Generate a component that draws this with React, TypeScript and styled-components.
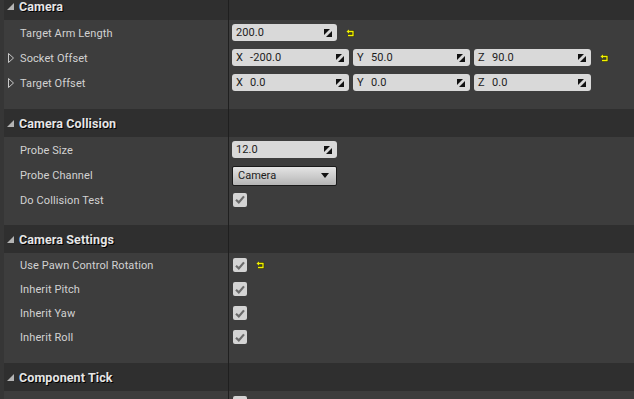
import React from "react";
import styled, { createGlobalStyle } from "styled-components";

const Global = createGlobalStyle`
  html, body { margin: 0; padding: 0; background: #3d3d3d; overflow: hidden; }
  body { font-family: Roboto, "Noto Sans", "Liberation Sans", sans-serif; }
`;

const Panel = styled.div`
  display: flex;
  width: 634px;
  height: 399px;
  overflow: hidden;
  background: #3d3d3d;
`;

const Strip = styled.div`
  width: 4px;
  flex: none;
  background: #363636;
`;

const Content = styled.div`
  flex: 1;
  display: flex;
  flex-direction: column;
  margin-top: -8px;
`;

const Header = styled.div`
  display: grid;
  grid-template-columns: 224px 1fr;
  height: 28px;
  flex: none;
  background: #2f2f2f;
`;

const HeaderTitle = styled.div`
  display: flex;
  align-items: center;
  gap: 5px;
  padding-left: 3px;
  font-weight: 700;
  font-size: 12.5px;
  color: #e6e6e6;
  text-shadow: 1px 1px 0 #000;
  letter-spacing: 0.1px;
`;

const Cell = styled.div`
  border-left: 1px solid #1f1f1f;
  display: flex;
  align-items: center;
  padding-left: 3px;
  gap: 4px;
`;

const Row = styled.div<{ $h: number }>`
  display: grid;
  grid-template-columns: 224px 1fr;
  height: ${(p) => p.$h}px;
  flex: none;
`;

const Label = styled.div`
  display: flex;
  align-items: center;
  position: relative;
  padding-left: 16px;
  padding-top: 1px;
  font-size: 11px;
  color: #d2d2d2;
  letter-spacing: 0.1px;
`;

const Expander = styled.svg`
  position: absolute;
  left: 4px;
  top: 50%;
  margin-top: -5px;
`;

const Spacer = styled.div<{ $h: number }>`
  display: grid;
  grid-template-columns: 224px 1fr;
  height: ${(p) => p.$h}px;
  flex: none;
`;

const NumBox = styled.div<{ $w: number }>`
  width: ${(p) => p.$w}px;
  height: 17px;
  box-sizing: border-box;
  background: #d9d9d9;
  border-radius: 3px;
  display: flex;
  align-items: center;
  padding: 0 5px 0 4px;
  font-size: 11px;
  color: #1c1c1c;
  letter-spacing: 0.1px;
`;

const Axis = styled.span`
  width: 14px;
  flex: none;
`;

const Value = styled.span`
  flex: 1;
`;

const Vector = styled.div`
  display: flex;
  gap: 4px;
`;

const Combo = styled.div`
  width: 105px;
  height: 20px;
  margin-top: 2px;
  box-sizing: border-box;
  border: 1px solid #1a1a1a;
  border-radius: 2px;
  background: linear-gradient(#e4e4e4, #c8c8c8 60%, #b4b4b4);
  display: flex;
  align-items: center;
  padding: 0 7px 0 5px;
  font-size: 11px;
  color: #1c1c1c;
  justify-content: space-between;
`;

const Check = styled.div`
  width: 14px;
  height: 14px;
  margin-left: 1px;
  border-radius: 2px;
  background: #d4d4d4;
  display: flex;
  align-items: center;
  justify-content: center;
`;

const Spin = () => (
  <svg width="8" height="8" viewBox="0 0 8 8">
    <polygon points="0,0 6,0 0,6" fill="#111" />
    <polygon points="8,2 8,8 2,8" fill="#111" />
  </svg>
);

const Reset = () => (
  <svg width="9" height="8" viewBox="0 0 9 8" style={{ marginLeft: 5 }}>
    <path d="M2 2.5 H7 V6.5 H2" fill="none" stroke="#2a2a00" strokeWidth="2.4" />
    <path d="M2 2.5 H7 V6.5 H2" fill="none" stroke="#f2f200" strokeWidth="1.3" />
    <polygon points="0.5,2.5 3,0.5 3,4.5" fill="#f2f200" />
  </svg>
);

const Tri = () => (
  <svg width="7" height="7" viewBox="0 0 7 7">
    <polygon points="7,0 7,7 0,7" fill="#b4b4b4" />
  </svg>
);

const Arrow = () => (
  <Expander width="6" height="10" viewBox="0 0 6 10">
    <polygon points="0.5,0.5 5.5,5 0.5,9.5" fill="none" stroke="#c8c8c8" strokeWidth="1" />
  </Expander>
);

const Tick = () => (
  <svg width="10" height="9" viewBox="0 0 10 9">
    <path d="M1 4.8 L3.8 7.4 L9 1.4" fill="none" stroke="#6b6b6b" strokeWidth="2.2" />
  </svg>
);

const Num = ({ v, w = 105 }: { v: string; w?: number }) => (
  <NumBox $w={w}>
    <Value>{v}</Value>
    <Spin />
  </NumBox>
);

const Vec = ({ vals }: { vals: string[] }) => (
  <Vector>
    {["X", "Y", "Z"].map((a, i) => (
      <NumBox key={a} $w={117}>
        <Axis>{a}</Axis>
        <Value>{vals[i]}</Value>
        <Spin />
      </NumBox>
    ))}
  </Vector>
);

const SectionHeader = ({ title }: { title: string }) => (
  <Header>
    <HeaderTitle>
      <Tri />
      {title}
    </HeaderTitle>
    <Cell />
  </Header>
);

const Prop = ({
  label,
  h = 25,
  expand,
  children,
}: {
  label: string;
  h?: number;
  expand?: boolean;
  children?: React.ReactNode;
}) => (
  <Row $h={h}>
    <Label>
      {expand && <Arrow />}
      {label}
    </Label>
    <Cell>{children}</Cell>
  </Row>
);

const Pad = ({ h }: { h: number }) => (
  <Spacer $h={h}>
    <div />
    <Cell />
  </Spacer>
);

const CheckBox = () => (
  <Check>
    <Tick />
  </Check>
);

export default function App() {
  return (
    <>
      <Global />
      <Panel>
        <Strip />
        <Content>
          <SectionHeader title="Camera" />
          <Prop label="Target Arm Length">
            <Num v="200.0" />
            <Reset />
          </Prop>
          <Prop label="Socket Offset" expand>
            <Vec vals={["-200.0", "50.0", "90.0"]} />
            <Reset />
          </Prop>
          <Prop label="Target Offset" expand>
            <Vec vals={["0.0", "0.0", "0.0"]} />
          </Prop>
          <Pad h={14} />

          <SectionHeader title="Camera Collision" />
          <Prop label="Probe Size">
            <Num v="12.0" />
          </Prop>
          <Prop label="Probe Channel">
            <Combo>
              <span>Camera</span>
              <svg width="8" height="5" viewBox="0 0 8 5">
                <polygon points="0,0 8,0 4,5" fill="#111" />
              </svg>
            </Combo>
          </Prop>
          <Prop label="Do Collision Test">
            <CheckBox />
          </Prop>
          <Pad h={13} />

          <SectionHeader title="Camera Settings" />
          <Prop label="Use Pawn Control Rotation" h={24}>
            <CheckBox />
            <Reset />
          </Prop>
          <Prop label="Inherit Pitch" h={24}>
            <CheckBox />
          </Prop>
          <Prop label="Inherit Yaw" h={24}>
            <CheckBox />
          </Prop>
          <Prop label="Inherit Roll" h={24}>
            <CheckBox />
          </Prop>
          <Pad h={14} />

          <SectionHeader title="Component Tick" />
          <Prop label="" h={24}>
            <CheckBox />
          </Prop>
        </Content>
      </Panel>
    </>
  );
}
